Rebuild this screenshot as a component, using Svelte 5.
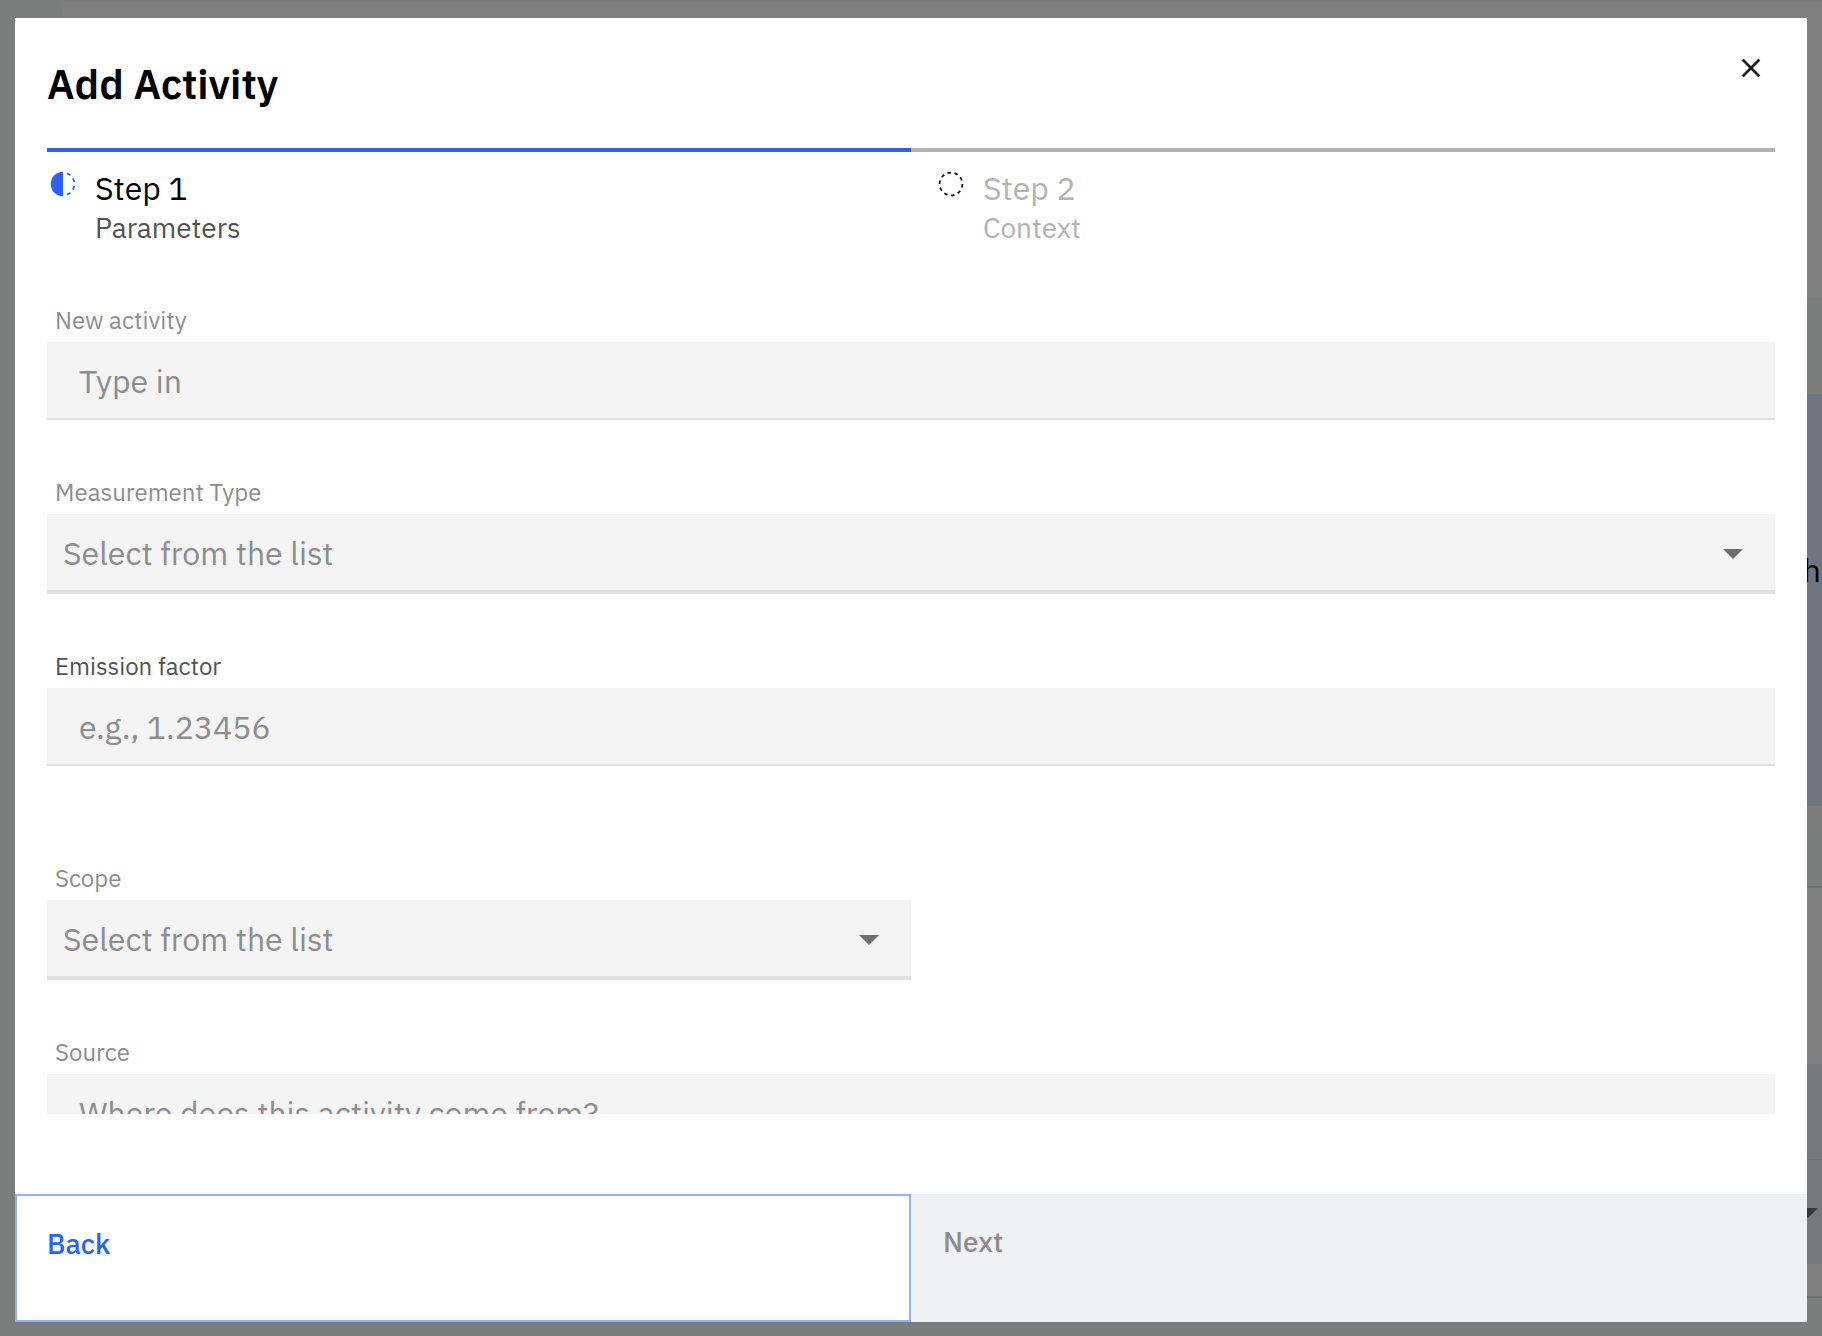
<script>

  const steps = [
    { title: "Step 1", text: "Parameters", current: true },
    { title: "Step 2", text: "Context", current: false },
  ]

  const fields = [
    { id: "activity", label: "New activity", type: "text", hint: "Type in" },
    { id: "measurement", label: "Measurement Type", type: "select", hint: "Select from the list" },
    { id: "factor", label: "Emission factor", type: "text", hint: "e.g., 1.23456", required: true, spaced: true },
    { id: "scope", label: "Scope", type: "select", hint: "Select from the list", half: true },
    { id: "source", label: "Source", type: "text", hint: "Where does this activity come from?" },
  ]

  let open = $state(true)

  function close() {
    open = false
  }

</script>

<div class="page">

  <!-- page that lies behind the dialog -->
  <div class="behind">
    <div class="top-bar"></div>
    <div class="banner"><span>h</span></div>
    <div class="panel">
      <div class="row"></div>
      <div class="row with-arrow">
        <svg class="caret" viewBox="0 0 20 10"><path d="M0 0h20L10 10z" /></svg>
      </div>
    </div>
  </div>

  {#if open}
    <div class="overlay">
      <div class="modal" role="dialog" aria-modal="true" aria-labelledby="modal-title">

        <header>
          <h1 id="modal-title">Add Activity</h1>
          <button class="close" aria-label="Close" onclick={close}>
            <svg viewBox="0 0 32 32">
              <path d="M24 9.4 22.6 8 16 14.6 9.4 8 8 9.4l6.6 6.6L8 22.6 9.4 24l6.6-6.6 6.6 6.6 1.4-1.4-6.6-6.6z" />
            </svg>
          </button>
        </header>

        <ol class="steps">
          {#each steps as step}
            <li class:current={step.current}>
              <svg class="step-icon" viewBox="0 0 32 32">
                {#if step.current}
                  <path d="M16 30V2a14 14 0 0 0 0 28z" />
                  <path d="M23.76 6.86l1.29-1.53a14 14 0 0 0-4.18-2.44l-.69 1.87a12 12 0 0 1 3.58 2.1z" />
                  <path d="M27.81 14l1.97-.41a13.9 13.9 0 0 0-1.64-4.54L26.41 10a11.9 11.9 0 0 1 1.4 4z" />
                  <path d="M26.41 22l1.73 1a14.1 14.1 0 0 0 1.64-4.59l-1.97-.34a12.1 12.1 0 0 1-1.4 3.93z" />
                  <path d="M20.18 27.24l.69 1.87a14 14 0 0 0 4.18-2.44l-1.29-1.53a12 12 0 0 1-3.58 2.1z" />
                {:else}
                  <circle cx="16" cy="16" r="13" pathLength="100" stroke-dasharray="5 5" />
                {/if}
              </svg>
              <div>
                <p class="step-title">{step.title}</p>
                <p class="step-text">{step.text}</p>
              </div>
            </li>
          {/each}
        </ol>

        <form class="fields">
          {#each fields as field}
            <div class="field" class:half={field.half} class:spaced={field.spaced}>
              <label for={field.id} class:required={field.required}>{field.label}</label>
              {#if field.type == "select"}
                <div class="select">
                  <select id={field.id}>
                    <option>{field.hint}</option>
                  </select>
                  <svg class="caret" viewBox="0 0 20 10"><path d="M0 0h20L10 10z" /></svg>
                </div>
              {:else}
                <input id={field.id} type="text" placeholder={field.hint} />
              {/if}
            </div>
          {/each}
        </form>

        <footer>
          <button class="back" onclick={close}>Back</button>
          <button class="next" disabled>Next</button>
        </footer>

      </div>
    </div>
  {/if}

</div>

<style>

  :global(body) {
    margin: 0;
    background: #7b7e7c;
  }

  .page {
    position: relative;
    height: 100vh;
    overflow: hidden;
    font-family: "IBM Plex Sans", Roboto, sans-serif;
    background: #7b7e7c;
  }

  .behind {
    display: flex;
    flex-direction: column;
    height: 100%;
    padding-left: 63px;
  }

  .top-bar {
    box-sizing: border-box;
    height: 298px;
    border-top: 2px solid #7c7c7c;
    background: #808080;
  }

  .banner {
    display: flex;
    align-items: center;
    justify-content: flex-end;
    height: 412px;
    margin-top: 96px;
    margin-bottom: 80px;
    background: #6f7480;
    color: #000000;
    font-size: 32px;
    line-height: 40px;
  }

  .banner span {
    padding-right: 1px;
    padding-bottom: 60px;
  }

  .panel {
    box-sizing: border-box;
    height: 412px;
    padding-top: 176px;
    border-top: 2px solid #707070;
    border-bottom: 2px solid #707070;
    background: #808080;
  }

  .row {
    box-sizing: border-box;
    height: 96px;
    background: #777879;
    border-bottom: 1px solid #6e6f70;
  }

  .with-arrow {
    display: flex;
    justify-content: flex-end;
    height: 104px;
    padding: 48px 4px 0;
    border-bottom: none;
  }

  .with-arrow .caret {
    fill: #393939;
  }

  .overlay {
    position: absolute;
    inset: 0;
    display: flex;
    padding: 18px 15px 14px;
  }

  .modal {
    display: flex;
    flex-direction: column;
    flex: 1;
    min-width: 0;
    background: #ffffff;
  }

  header {
    display: flex;
    justify-content: space-between;
    align-items: flex-start;
    height: 130px;
    padding-left: 32px;
  }

  h1 {
    margin: 40px 0 0;
    font-size: 41px;
    line-height: 52px;
    font-weight: 600;
    color: #000000;
  }

  button {
    font-family: inherit;
    cursor: pointer;
  }

  .close {
    width: 96px;
    height: 96px;
    padding: 0;
    margin-right: 8px;
    margin-top: 2px;
    border: none;
    background: none;
  }

  .close svg {
    display: block;
    width: 36px;
    height: 36px;
    margin: 0 auto;
    fill: #161616;
    stroke: #161616;
    stroke-width: 0.5;
  }

  .steps {
    display: flex;
    margin: 0 32px;
    padding: 0;
    list-style: none;
  }

  .steps li {
    display: flex;
    gap: 18px;
    box-sizing: border-box;
    width: 50%;
    height: 104px;
    padding: 18px 0 0 26px;
    border-top: 4px solid #b3b3b3;
    color: #b3b3b3;
  }

  .steps li.current {
    padding-left: 2px;
    border-color: #2c61f6;
    color: #000000;
  }

  .step-icon {
    width: 28px;
    height: 28px;
    fill: none;
    stroke: #161616;
    stroke-width: 2;
  }

  .current .step-icon {
    fill: #2c61f6;
    stroke: none;
  }

  .steps p {
    margin: 0;
  }

  .step-title {
    font-size: 32px;
    line-height: 36px;
  }

  .step-text {
    font-size: 28px;
    line-height: 44px;
  }

  .current .step-text {
    color: #525252;
  }

  .fields {
    flex: 1;
    min-height: 0;
    margin: 50px 32px 80px;
    overflow: hidden;
  }

  .field {
    margin-bottom: 54px;
  }

  .field.spaced {
    margin-bottom: 94px;
  }

  .field.half {
    width: 50%;
  }

  label {
    display: block;
    padding: 2px 8px 6px;
    font-size: 24px;
    line-height: 32px;
    color: #8d8d8d;
  }

  label.required {
    color: #525252;
  }

  input,
  select {
    display: block;
    box-sizing: border-box;
    width: 100%;
    height: 78px;
    padding: 2px 32px 0;
    border: none;
    border-bottom: 2px solid #e0e0e0;
    border-radius: 0;
    outline: none;
    background: #f4f4f4;
    font-family: inherit;
    font-size: 32px;
    color: #8d8d8d;
  }

  input::placeholder {
    color: #8d8d8d;
    opacity: 1;
  }

  select {
    height: 80px;
    padding: 2px 16px 0;
    border-bottom-width: 4px;
    appearance: none;
  }

  .select {
    display: grid;
    align-items: center;
  }

  .select > * {
    grid-area: 1 / 1;
  }

  .caret {
    width: 20px;
    height: 10px;
    fill: #6f6f6f;
  }

  .select .caret {
    justify-self: end;
    margin-right: 32px;
    pointer-events: none;
  }

  footer {
    display: flex;
    height: 128px;
  }

  footer button {
    display: flex;
    box-sizing: border-box;
    width: 50%;
    padding: 30px 32px;
    border: none;
    font-size: 28px;
    line-height: 36px;
    font-weight: 500;
  }

  .back {
    border: 2px solid #97b0fa;
    padding-left: 30px;
    background: #ffffff;
    color: #2c61f6;
  }

  .next {
    background: #eff1f3;
    color: #8d8d8d;
    cursor: default;
  }

</style>
